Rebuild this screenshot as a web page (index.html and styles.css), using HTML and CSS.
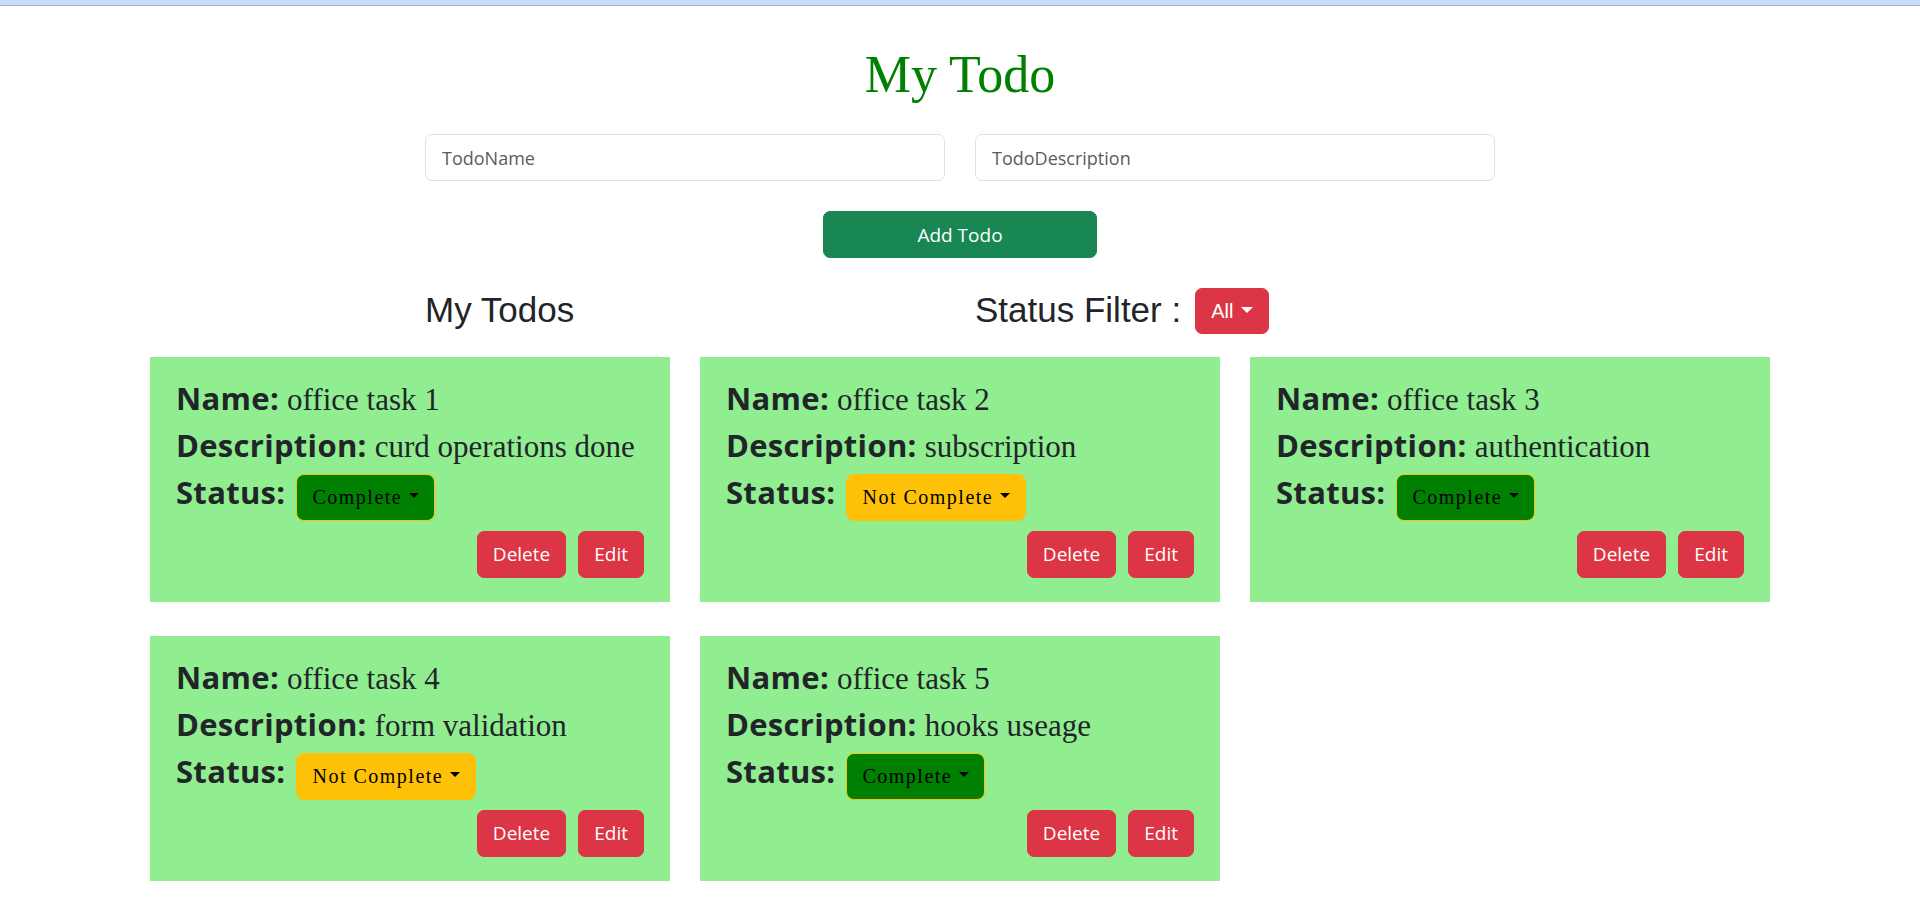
FILE: index.html
```html
<!DOCTYPE html>
<html lang="en">
<head>
<meta charset="utf-8">
<title>My Todo</title>
<link rel="stylesheet" href="styles.css">
</head>
<body>
<div class="topbar"></div>
<h1 class="title">My Todo</h1>

<div class="form-row">
  <input class="field" type="text" placeholder="TodoName">
  <input class="field" type="text" placeholder="TodoDescription">
</div>

<div class="add-wrap">
  <button class="btn-add" type="button">Add Todo</button>
</div>

<div class="list-head">
  <h3 class="head-title">My Todos</h3>
  <div class="filter">
    <h3 class="head-title">Status Filter :</h3>
    <button class="btn-filter" type="button">All<span class="caret caret-white"></span></button>
  </div>
</div>

<div class="cards">
  <div class="card">
    <div class="row"><span class="lbl">Name:</span> <span class="val">office task 1</span></div>
    <div class="row"><span class="lbl">Description:</span> <span class="val">curd operations done</span></div>
    <div class="row status-row"><span class="lbl">Status:</span><button class="status status-done" type="button">Complete<span class="caret"></span></button></div>
    <div class="actions"><button class="btn-red" type="button">Delete</button><button class="btn-red" type="button">Edit</button></div>
  </div>
  <div class="card">
    <div class="row"><span class="lbl">Name:</span> <span class="val">office task 2</span></div>
    <div class="row"><span class="lbl">Description:</span> <span class="val">subscription</span></div>
    <div class="row status-row"><span class="lbl">Status:</span><button class="status status-todo" type="button">Not Complete<span class="caret"></span></button></div>
    <div class="actions"><button class="btn-red" type="button">Delete</button><button class="btn-red" type="button">Edit</button></div>
  </div>
  <div class="card">
    <div class="row"><span class="lbl">Name:</span> <span class="val">office task 3</span></div>
    <div class="row"><span class="lbl">Description:</span> <span class="val">authentication</span></div>
    <div class="row status-row"><span class="lbl">Status:</span><button class="status status-done" type="button">Complete<span class="caret"></span></button></div>
    <div class="actions"><button class="btn-red" type="button">Delete</button><button class="btn-red" type="button">Edit</button></div>
  </div>
  <div class="card">
    <div class="row"><span class="lbl">Name:</span> <span class="val">office task 4</span></div>
    <div class="row"><span class="lbl">Description:</span> <span class="val">form validation</span></div>
    <div class="row status-row"><span class="lbl">Status:</span><button class="status status-todo" type="button">Not Complete<span class="caret"></span></button></div>
    <div class="actions"><button class="btn-red" type="button">Delete</button><button class="btn-red" type="button">Edit</button></div>
  </div>
  <div class="card">
    <div class="row"><span class="lbl">Name:</span> <span class="val">office task 5</span></div>
    <div class="row"><span class="lbl">Description:</span> <span class="val">hooks useage</span></div>
    <div class="row status-row"><span class="lbl">Status:</span><button class="status status-done" type="button">Complete<span class="caret"></span></button></div>
    <div class="actions"><button class="btn-red" type="button">Delete</button><button class="btn-red" type="button">Edit</button></div>
  </div>
</div>
</body>
</html>
```

FILE: styles.css
```css
* { box-sizing: border-box; }

body {
  margin: 0;
  background: #ffffff;
  color: #212529;
  font-family: "Open Sans", "Noto Sans", sans-serif;
}

.topbar {
  height: 6px;
  background: #c9dcf7;
  border-bottom: 1px solid #a3afc6;
}

.title {
  margin: 40px 0 0;
  text-align: center;
  font-family: "Liberation Serif", serif;
  font-weight: normal;
  font-size: 52px;
  line-height: 57px;
  color: #008000;
}

.form-row {
  width: 1070px;
  margin: 31px auto 0;
  display: grid;
  grid-template-columns: 520px 520px;
  column-gap: 30px;
}

.field {
  height: 47px;
  padding: 0 16px;
  border: 1px solid #dee2e6;
  border-radius: 7px;
  font-family: "Open Sans", sans-serif;
  font-size: 18px;
  color: #212529;
  background: #fff;
  outline: none;
}
.field::placeholder { color: #595c5f; }

.add-wrap {
  display: flex;
  justify-content: center;
  margin-top: 30px;
}

.btn-add {
  width: 274px;
  height: 47px;
  border: 1px solid #198754;
  border-radius: 7px;
  background: #198754;
  color: #fff;
  font-family: "Open Sans", sans-serif;
  font-size: 19px;
  padding: 0;
}

.list-head {
  width: 1070px;
  margin: 30px auto 0;
  display: grid;
  grid-template-columns: 520px 520px;
  column-gap: 30px;
  align-items: center;
  height: 46px;
}

.head-title {
  margin: 0;
  font-family: "Liberation Sans", Arial, sans-serif;
  font-weight: normal;
  font-size: 35px;
  line-height: 36px;
  color: #212529;
  position: relative;
  top: -1px;
}

.filter {
  display: flex;
  align-items: center;
  gap: 14px;
}

.btn-filter {
  height: 46px;
  padding: 0 15px;
  border: 1px solid #dc3545;
  border-radius: 7px;
  background: #dc3545;
  color: #fff;
  font-family: "Liberation Sans", Arial, sans-serif;
  font-size: 20px;
  display: inline-flex;
  align-items: center;
}

.caret {
  display: inline-block;
  width: 0;
  height: 0;
  margin-left: 6.5px;
  vertical-align: 5px;
  border-top: 5px solid #000;
  border-left: 5px solid transparent;
  border-right: 5px solid transparent;
}
.caret-white {
  margin-left: 8px;
  border-top: 6px solid #fff;
  border-left: 6px solid transparent;
  border-right: 6px solid transparent;
  align-self: center;
  position: relative;
  top: -1px;
}

.cards {
  width: 1620px;
  margin: 23px auto 0;
  display: grid;
  grid-template-columns: repeat(3, 520px);
  column-gap: 30px;
  row-gap: 34px;
}

.card {
  background: #90ee90;
  padding: 18px 26px 24px;
  font-family: "Open Sans", sans-serif;
  font-size: 31px;
  line-height: 47px;
  height: 245px;
}

.row {
  height: 47px;
  white-space: nowrap;
}

.lbl {
  font-weight: 700;
  letter-spacing: 0.3px;
  color: #212529;
}

.val {
  font-family: "Liberation Serif", serif;
  font-size: 31px;
  color: #212529;
}

.status-row {
  display: flex;
  align-items: baseline;
  height: 54px;
}

.status {
  margin-left: 11px;
  height: 47px;
  padding: 0 15px;
  border: 1px solid #ffc107;
  border-radius: 8px;
  font-family: "Liberation Serif", serif;
  font-size: 20px;
  line-height: 30px;
  letter-spacing: 1.5px;
  color: #000;
  display: inline-flex;
  align-items: center;
}
.status .caret { align-self: center; position: relative; top: -2px; }
.status-done { background: #008000; }
.status-todo { background: #ffc107; }

.actions {
  margin-top: 8px;
  display: flex;
  justify-content: flex-end;
  gap: 12px;
}

.btn-red {
  height: 47px;
  padding: 0 15px;
  border: 1px solid #dc3545;
  border-radius: 7px;
  background: #dc3545;
  color: #fff;
  font-family: "Open Sans", sans-serif;
  font-size: 19px;
  line-height: 1;
}
```
